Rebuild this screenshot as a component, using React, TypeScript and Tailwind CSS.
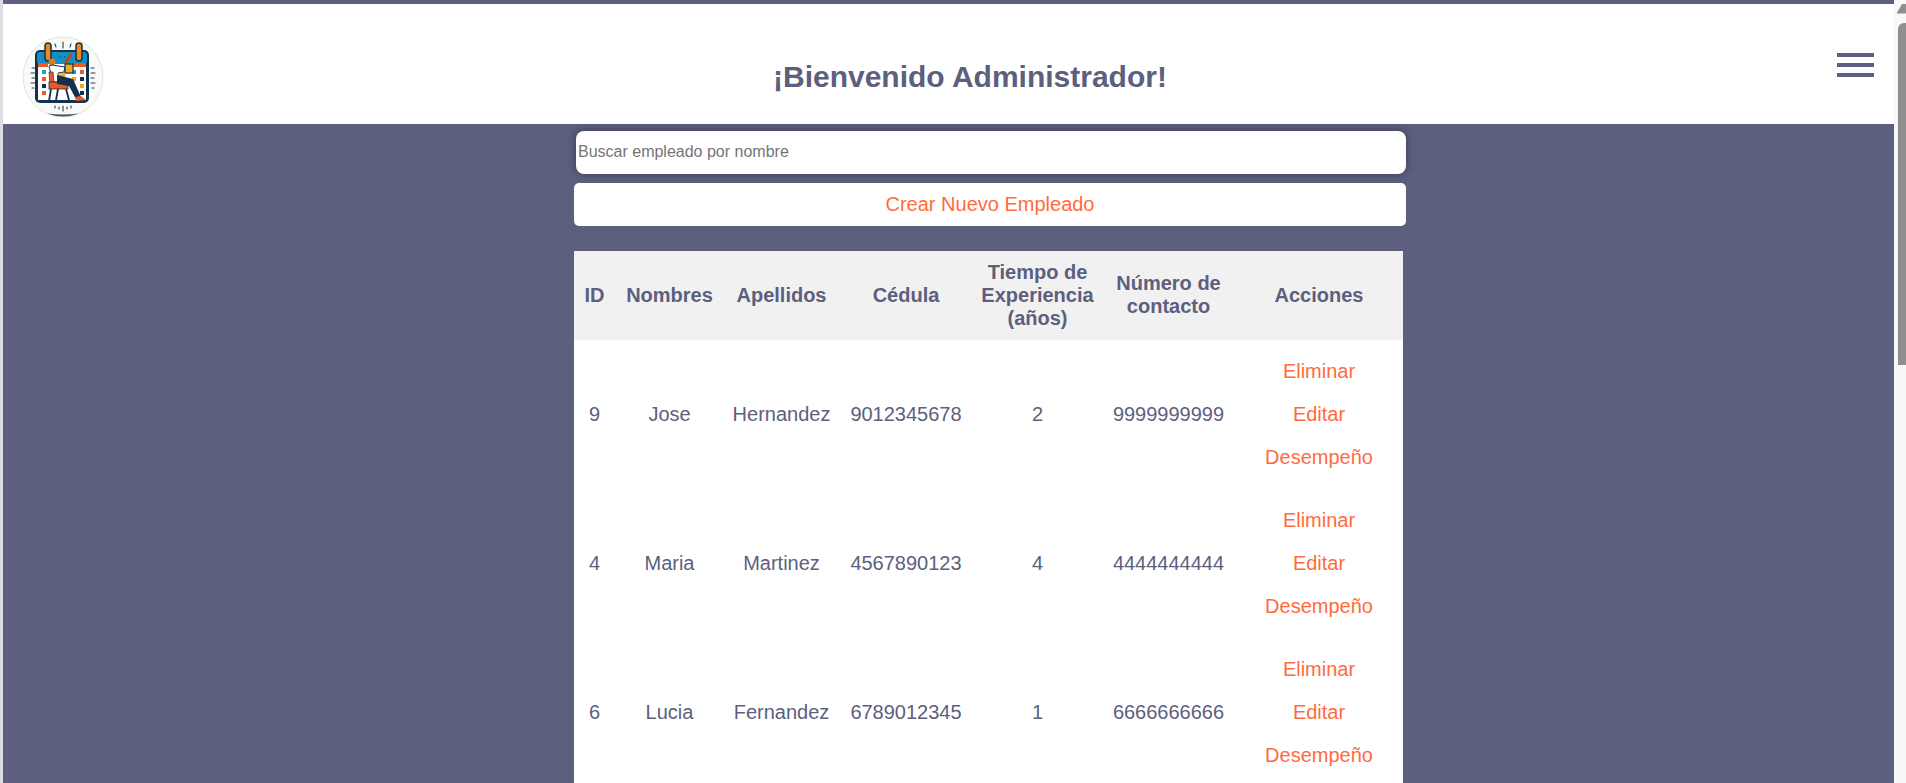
import React from "react";

const rows = [
  ["9", "Jose", "Hernandez", "9012345678", "2", "9999999999"],
  ["4", "Maria", "Martinez", "4567890123", "4", "4444444444"],
  ["6", "Lucia", "Fernandez", "6789012345", "1", "6666666666"],
];
const headers = ["ID", "Nombres", "Apellidos", "Cédula", "Tiempo de Experiencia (años)", "Número de contacto", "Acciones"];

function Logo() {
  return (
    <svg width="82" height="82" viewBox="0 0 82 82" className="block blur-[0.35px]">
      <circle cx="41" cy="41" r="40" fill="#f8faf6" stroke="#d9dcd8" strokeWidth="0.8" />
      <path d="M25 77.5 Q41 83.5 57 77.5 Q41 79.5 25 77.5Z" fill="#4d5063" />
      <g stroke="#2a3a50" strokeWidth="1.1" strokeLinecap="round">
        <path d="M41 6v6M33 8l1 3M49 8l-1 3M41 70v5M33 70v2M37 71v2M45 71v2M49 70v2M10 32h3M9 37h4M10 42h3M9 47h4M10 52h2M69 32h3M69 37h4M69 42h3M69 47h4M70 52h2" />
      </g>
      <rect x="13" y="14" width="54" height="53" rx="5" fill="#14304f" />
      <rect x="15" y="16" width="50" height="12" rx="3" fill="#158ec3" />
      <rect x="16" y="28" width="48" height="36" fill="#ffffff" />
      <rect x="16" y="27" width="10" height="4" fill="#ea5a24" />
      <rect x="45" y="27" width="19" height="4" fill="#ea5a24" />
      <rect x="23" y="7" width="6" height="18" rx="3" fill="#e98a1d" stroke="#14304f" strokeWidth="1.5" />
      <rect x="54" y="7" width="6" height="18" rx="3" fill="#e98a1d" stroke="#14304f" strokeWidth="1.5" />
      <path d="M37 21h1M42 21h1" stroke="#14304f" strokeWidth="1.2" />
      <g>
        <rect x="20" y="34" width="4" height="4" fill="#1aa2d4" />
        <rect x="20" y="41" width="4" height="4" fill="#ea5a24" />
        <rect x="20" y="48" width="4" height="4" fill="#14304f" />
        <rect x="20" y="55" width="4" height="4" fill="#ea5a24" />
        <rect x="50" y="34" width="4" height="4" fill="#1aa2d4" />
        <rect x="50" y="41" width="4" height="4" fill="#f2ab1b" />
        <rect x="58" y="34" width="4" height="4" fill="#ea5a24" />
        <rect x="58" y="41" width="4" height="4" fill="#14304f" />
        <rect x="58" y="48" width="4" height="4" fill="#f2ab1b" />
        <rect x="58" y="55" width="4" height="4" fill="#14304f" />
      </g>
      <circle cx="30" cy="26" r="3.4" fill="#e07a1f" />
      <path d="M27 30 L30 29 L43 31 L42 36 L36 37 L37 46 L31 46Z" fill="#ffffff" stroke="#14304f" strokeWidth="1" />
      <path d="M27 36 L31 36 L32 47 L28 47Z" fill="#ea5a24" stroke="#14304f" strokeWidth="0.7" />
      <rect x="43" y="28" width="8" height="9" fill="#f2ab1b" stroke="#14304f" strokeWidth="1.2" />
      <path d="M44 26 L49 19" stroke="#b5471b" strokeWidth="3" strokeLinecap="round" />
      <path d="M36 38 L42 37 L44 40 L37 44Z" fill="#f2ab1b" />
      <rect x="27" y="46" width="19" height="7" fill="#ea5a24" stroke="#14304f" strokeWidth="0.8" />
      <path d="M29 53 L27 65 M44 53 L47 64 M36 53 L34 64" stroke="#14304f" strokeWidth="1.8" fill="none" />
      <path d="M35 39 L51 43 L59 61 L54 63 L47 50 L35 48Z" fill="#14304f" />
      <path d="M53 61 L59 60 L64 64 L54 65Z" fill="#ea5a24" />
    </svg>
  );
}

export default function App() {
  return (
    <div className="flex h-[783px] w-full overflow-hidden bg-[#5c5f7e] font-['Liberation_Sans',Arial,sans-serif] text-[#5c5f7e]">
      <div className="w-[3px] shrink-0 bg-[#dcdde1]" />
      <div className="flex min-w-0 flex-1 flex-col">
        <header className="mt-1 flex h-[120px] shrink-0 bg-white">
          <div className="ml-[19px] mt-[32px] h-[82px] w-[82px] shrink-0">
            <Logo />
          </div>
          <h1 className="ml-[669px] mt-[56px] h-[34px] text-[30px] font-bold leading-[34px]">¡Bienvenido Administrador!</h1>
          <div className="ml-auto mr-[20px] mt-[49px] flex h-[24px] w-[37px] flex-col justify-between">
            <span className="block h-1 bg-[#5c5f7e]" />
            <span className="block h-1 bg-[#5c5f7e]" />
            <span className="block h-1 bg-[#5c5f7e]" />
          </div>
        </header>

        <main className="ml-[571px] w-[832px]">
          <input
            placeholder="Buscar empleado por nombre"
            className="ml-[2px] mt-[7px] block h-[43px] w-[830px] rounded-lg bg-white px-[2px] pb-[2px] text-base text-[#757575] shadow-[0_0_8px_rgba(0,0,0,0.4)] outline-none placeholder:text-[#757575]"
          />
          <button className="mt-[9px] block h-[43px] w-full rounded-[5px] bg-white pb-[2px] text-[20px] text-[#ff6b3d]">
            Crear Nuevo Empleado
          </button>
          <table className="mt-[25px] w-[829px] table-fixed border-collapse bg-white text-center text-[20px]">
            <colgroup>
              <col className="w-[41px]" />
              <col className="w-[109px]" />
              <col className="w-[115px]" />
              <col className="w-[134px]" />
              <col className="w-[129px]" />
              <col className="w-[133px]" />
              <col className="w-[168px]" />
            </colgroup>
            <thead>
              <tr className="h-[89px] bg-[#f1f1f1]">
                {headers.map((h) => (
                  <th key={h} className="px-[8px] pb-[1px] font-bold leading-[23px]">
                    {h}
                  </th>
                ))}
              </tr>
            </thead>
            <tbody>
              {rows.map((r) => (
                <tr key={r[0]} className="h-[149px]">
                  {r.map((c, i) => (
                    <td key={i} className="p-0 pb-[2px]">
                      {c}
                    </td>
                  ))}
                  <td className="p-0 text-[#ff6b3d]">
                    <div className="flex flex-col items-center leading-[43px]">
                      <span>Eliminar</span>
                      <span>Editar</span>
                      <span>Desempeño</span>
                    </div>
                  </td>
                </tr>
              ))}
            </tbody>
          </table>
        </main>
      </div>
      <div className="relative w-[12px] shrink-0 bg-[#f8f8f8]">
        <svg width="12" height="12" viewBox="0 0 12 12" className="absolute left-0 top-[3px]">
          <path d="M2.5 10.5 L8 1 L12 1 L12 10.5Z" fill="#8f8f8f" />
        </svg>
        <div className="absolute right-0 top-[23px] h-[342px] w-[8px] rounded-tl-[6px] bg-[#8f8f8f]" />
      </div>
    </div>
  );
}
